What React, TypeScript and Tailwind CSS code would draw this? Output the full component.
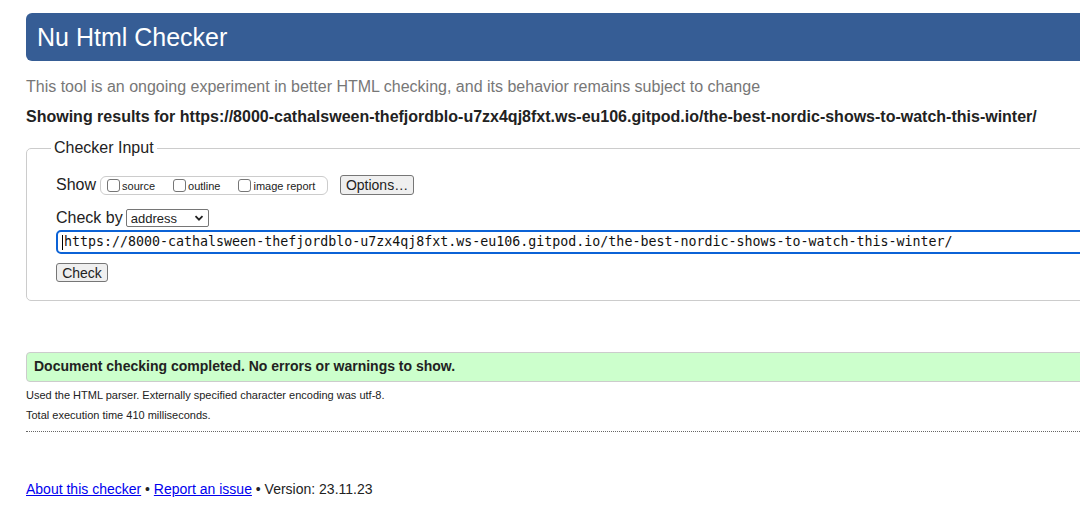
import React from 'react';

const url = 'https://8000-cathalsween-thefjordblo-u7zx4qj8fxt.ws-eu106.gitpod.io/the-best-nordic-shows-to-watch-this-winter/';

const Check = ({ label }: { label: string }) => (
  <label className="flex items-center gap-[2px]">
    <span className="w-[13px] h-[13px] border border-[#767676] rounded-[3px] bg-white" />
    <span className="text-[11px] leading-[13px] mt-[2px]">{label}</span>
  </label>
);

const App = () => {
  return (
    <div className="w-[1080px] h-[527px] overflow-hidden bg-white text-[#222] font-['Liberation_Sans',Arial,sans-serif]">
      <div className="ml-[26px] w-[1100px] pt-[13px]">
        <div className="h-[48px] bg-[#365d95] rounded-l-[6px] flex items-center pl-[11px]">
          <h1 className="text-[25px] text-white leading-none">Nu Html Checker</h1>
        </div>

        <p className="mt-[17px] text-[16px] leading-[18px] text-[#777]">
          This tool is an ongoing experiment in better HTML checking, and its behavior remains subject to change
        </p>
        <p className="mt-[12px] text-[16px] leading-[18px] font-bold">
          Showing results for {url}
        </p>

        <fieldset className="mt-[13px] border border-[#ccc] rounded-[5px]">
          <legend className="ml-[24px] px-[3px] text-[16px] leading-[18px] text-[#222]">Checker Input</legend>

          <div className="pl-[29px] pt-[18px] pb-[15px]">
            <div className="flex items-center h-[20px]">
              <span className="text-[16px] leading-[18px]">Show</span>
              <div className="ml-[4px] h-[19px] w-[228px] border border-[#ccc] rounded-[6px] flex items-center pl-[6px] gap-[18px]">
                <Check label="source" />
                <Check label="outline" />
                <Check label="image report" />
              </div>
              <button className="ml-[12px] h-[20px] w-[74px] border border-[#767676] rounded-[3px] bg-[#efefef] text-[14px] leading-none">
                Options…
              </button>
            </div>

            <div className="flex items-center mt-[14px] h-[18px]">
              <span className="text-[16px] leading-[18px]">Check by</span>
              <div className="ml-[3px] h-[18px] w-[83px] border border-[#767676] rounded-[2px] flex items-center justify-between pl-[4px] pr-[4px]">
                <span className="text-[13px] leading-none">address</span>
                <svg width="10" height="10" viewBox="0 0 10 10">
                  <path d="M1.5 3.2 L5 6.7 L8.5 3.2" fill="none" stroke="#222" strokeWidth="1.8" />
                </svg>
              </div>
            </div>

            <div className="mt-[3px] h-[24px] w-[1060px] border-2 border-[#0b62d6] rounded-[5px] flex items-center pl-[4px]">
              <span className="w-[1px] h-[15px] bg-black" />
              <span className="ml-[1px] text-[13.3px] leading-none font-['DejaVu_Sans_Mono',monospace] text-[#111]">{url}</span>
            </div>

            <button className="mt-[9px] h-[19px] w-[52px] border border-[#767676] rounded-[3px] bg-[#efefef] text-[14px] leading-none">
              Check
            </button>
          </div>
        </fieldset>

        <div className="mt-[51px] h-[30px] bg-[#ccffcc] border border-[#ccc] rounded-l-[4px] flex items-center pl-[7px]">
          <span className="text-[14px] font-bold">Document checking completed. No errors or warnings to show.</span>
        </div>

        <div className="border-b border-dotted border-[#666] pb-[9px]">
          <p className="mt-[7px] text-[11px] leading-[13px]">Used the HTML parser. Externally specified character encoding was utf-8.</p>
          <p className="mt-[7px] text-[11px] leading-[13px]">Total execution time 410 milliseconds.</p>
        </div>

        <p className="mt-[49px] text-[14px] leading-[16px]">
          <a href="#" className="text-[#0000ee] underline">About this checker</a>
          {' • '}
          <a href="#" className="text-[#0000ee] underline">Report an issue</a>
          {' • Version: 23.11.23'}
        </p>
      </div>
    </div>
  );
};

export default App;
